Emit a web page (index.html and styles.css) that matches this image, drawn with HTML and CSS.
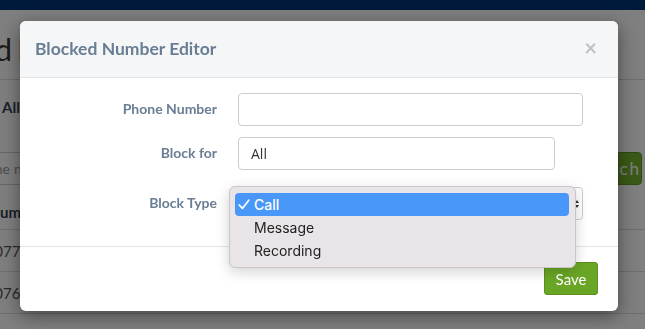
FILE: index.html
```html
<!DOCTYPE html>
<html lang="en">
<head>
    <meta charset="UTF-8">
    <meta name="viewport" content="width=device-width, initial-scale=1.0">
    <title>Blocked Numbers</title>
    <link rel="stylesheet" href="styles.css">
</head>
<body>
    <div class="topbar"></div>

    <div class="page">
        <div class="page-head">
            <h1 class="page-title"><span class="clip clip-title"><span>Blocked</span></span><span>Numbers</span></h1>
        </div>

        <div class="tabs">
            <span class="tab">All</span>
        </div>

        <div class="search">
            <div class="search-input"><span class="clip clip-search"><span>Search for the</span></span><span>number</span></div>
            <button class="search-btn">Search</button>
        </div>

        <table class="numbers">
            <tr><th><span class="clip clip-head"><span>N</span></span>umber</th></tr>
            <tr><td><span class="clip clip-num"><span>+440</span></span>7700900461</td></tr>
            <tr><td><span class="clip clip-num"><span>+440</span></span>7624003218</td></tr>
        </table>
    </div>

    <div class="backdrop"></div>

    <div class="modal">
        <div class="modal-header">
            <h4 class="modal-title">Blocked Number Editor</h4>
            <span class="close">&times;</span>
        </div>

        <div class="modal-body">
            <div class="form-row">
                <label class="form-label">Phone Number</label>
                <div class="form-control"></div>
            </div>
            <div class="form-row row-for">
                <label class="form-label">Block for</label>
                <div class="form-control short">All</div>
            </div>
            <div class="form-row">
                <label class="form-label">Block Type</label>
                <div class="select-wrap">
                    <div class="form-control select">
                        <svg class="select-arrow" width="6" height="10" viewBox="0 0 6 10">
                            <path d="M1 4 L3 1 L5 4 Z M1 6 L3 9 L5 6 Z" fill="#333"/>
                        </svg>
                    </div>
                    <div class="select-menu">
                        <div class="option selected">
                            <svg class="check" width="12" height="11" viewBox="0 0 12 11">
                                <path d="M1.2 6 L4.4 9.4 L10.8 1.2" fill="none" stroke="white" stroke-width="1.7" stroke-linecap="round" stroke-linejoin="round"/>
                            </svg>Call
                        </div>
                        <div class="option">Message</div>
                        <div class="option">Recording</div>
                    </div>
                </div>
            </div>
        </div>

        <div class="modal-footer">
            <button class="btn-save">Save</button>
        </div>
    </div>
</body>
</html>
```

FILE: styles.css
```css
body {
    margin: 0;
    font-family: Lato, "Open Sans", sans-serif;
    background-color: white;
    overflow: hidden;
    height: 329px;
}
.topbar {
    height: 10px;
    background-color: #003476;
}
.clip {
    display: inline-flex;
    justify-content: flex-end;
    white-space: nowrap;
}
.page-head {
    height: 70px;
    border-bottom: 1px solid #dddddd;
    box-sizing: border-box;
}
.page-title {
    margin: 0;
    padding-top: 20px;
    display: flex;
    gap: 5px;
    font-size: 31px;
    font-weight: normal;
    color: #3a3a3a;
    white-space: nowrap;
}
.clip-title {
    width: 12px;
}
.tabs {
    height: 72px;
    padding-left: 2px;
    padding-top: 17px;
    box-sizing: border-box;
}
.tab {
    font-weight: bold;
    font-size: 15px;
    color: #33475c;
}
.search {
    display: flex;
    height: 33px;
}
.search-input {
    flex: 1;
    border-top: 1px solid #cccccc;
    border-bottom: 1px solid #cccccc;
    display: flex;
    align-items: center;
    gap: 4px;
    font-size: 14px;
    color: #999999;
    white-space: nowrap;
}
.clip-search {
    width: 10px;
}
.search-btn {
    width: 70px;
    margin-right: 3px;
    background-color: #76b42e;
    border: 1px solid #5f9424;
    border-radius: 4px;
    color: white;
    font-family: Lato, sans-serif;
    font-size: 17px;
    letter-spacing: 2px;
    text-align: right;
    padding-right: 0;
}
.numbers {
    width: 100%;
    border-collapse: collapse;
    margin-top: 10px;
}
.numbers th,
.numbers td {
    text-align: left;
    padding: 0;
    border-bottom: 1px solid #dddddd;
    font-size: 15px;
    white-space: nowrap;
}
.numbers th {
    height: 34px;
    color: #2f3f50;
    font-weight: bold;
    vertical-align: middle;
}
.numbers td {
    height: 41px;
    color: #555555;
}
.clip-head {
    width: 0;
}
.clip-num {
    width: 3px;
}
.backdrop {
    position: fixed;
    inset: 0;
    background-color: rgba(0, 0, 0, 0.5);
}
.modal {
    position: absolute;
    left: 20px;
    top: 21px;
    width: 598px;
    background-color: white;
    border-radius: 6px;
    box-shadow: 0 5px 18px rgba(0, 0, 0, 0.45);
}
.modal-header {
    height: 57px;
    box-sizing: border-box;
    background-color: #f5f6f8;
    border-bottom: 1px solid #e3e5e8;
    border-radius: 6px 6px 0 0;
    display: flex;
    align-items: center;
    justify-content: space-between;
    padding: 0 21px 2px 15px;
}
.modal-title {
    margin: 0;
    font-size: 17.5px;
    font-weight: bold;
    color: #697d93;
}
.close {
    font-size: 22px;
    font-weight: bold;
    color: #c2c2c2;
    line-height: 1;
}
.modal-body {
    padding: 15px 35px 26px 15px;
}
.form-row {
    display: grid;
    grid-template-columns: 182px 345px;
    column-gap: 21px;
    margin-bottom: 11px;
}
.form-row.row-for {
    margin-bottom: 17px;
}
.form-row:last-child {
    margin-bottom: 0;
}
.form-label {
    text-align: right;
    font-size: 14px;
    font-weight: bold;
    color: #697d93;
    padding-top: 7px;
}
.form-control {
    height: 33px;
    box-sizing: border-box;
    border: 1px solid #cccccc;
    border-radius: 4px;
    padding: 0 12px;
    display: flex;
    align-items: center;
    font-family: "Open Sans", sans-serif;
    font-size: 14px;
    color: #333333;
}
.form-control.short {
    width: 317px;
}
.select-wrap {
    position: relative;
}
.form-control.select {
    justify-content: flex-end;
    padding-right: 2px;
}
.select-arrow {
    display: block;
}
.select-menu {
    position: absolute;
    left: -9px;
    top: -1px;
    width: 347px;
    box-sizing: border-box;
    padding: 6px 6px 5px 5px;
    background-color: #e8e4e8;
    border: 1px solid #c9c5c9;
    border-radius: 6px;
    box-shadow: 0 4px 14px rgba(0, 0, 0, 0.18);
    font-family: Inter, sans-serif;
    font-size: 14px;
    color: #222222;
}
.option {
    height: 23px;
    line-height: 23px;
    padding-left: 19px;
    border-radius: 4px;
    position: relative;
}
.option.selected {
    background-color: #4a97fa;
    color: white;
    font-weight: 500;
}
.check {
    position: absolute;
    left: 3px;
    top: 6px;
}
.modal-footer {
    border-top: 1px solid #e5e5e5;
    padding: 15px 20px 16px;
    display: flex;
    justify-content: flex-end;
}
.btn-save {
    width: 54px;
    height: 33px;
    background-color: #6aa626;
    border: 1px solid #5b8f20;
    border-radius: 3px;
    color: white;
    font-family: Lato, sans-serif;
    font-size: 15px;
}
```
